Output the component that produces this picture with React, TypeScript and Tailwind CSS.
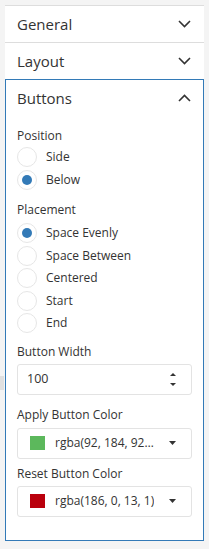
import { useState } from "react";

const font = { fontFamily: '"Open Sans", "Noto Sans", sans-serif' };

function Chevron({ up }: { up?: boolean }) {
  return (
    <svg width="13" height="8" viewBox="0 0 13 8" className="text-[#333]">
      <path
        d={up ? "M1 7 L6.5 1.5 L12 7" : "M1 1 L6.5 6.5 L12 1"}
        fill="none"
        stroke="currentColor"
        strokeWidth="1.6"
      />
    </svg>
  );
}

function Radio({ label, checked, onClick }: { label: string; checked: boolean; onClick: () => void }) {
  return (
    <div className="flex items-center h-[22.5px] cursor-pointer" onClick={onClick}>
      <span className="w-[20px] h-[20px] rounded-full border border-[#e6e6e6] bg-white flex items-center justify-center">
        {checked && <span className="w-[10px] h-[10px] rounded-full bg-[#337ab7]" />}
      </span>
      <span className="ml-[9px] text-[12px] text-[#333]">{label}</span>
    </div>
  );
}

function CaretDown() {
  return (
    <svg width="7" height="4" viewBox="0 0 7 4" className="shrink-0 ml-auto">
      <path d="M0 0 L7 0 L3.5 4 Z" fill="#333" />
    </svg>
  );
}

function ColorSelect({ color, value }: { color: string; value: string }) {
  return (
    <div className="h-[31px] border border-[#e3e3e3] rounded-[3px] flex items-center pl-[12px] pr-[15px]">
      <span className="w-[15px] h-[14px] shrink-0" style={{ backgroundColor: color }} />
      <span className="ml-[10px] max-w-[101px] text-[12px] text-[#333] truncate">{value}</span>
      <CaretDown />
    </div>
  );
}

export default function App() {
  const [position, setPosition] = useState("Below");
  const [placement, setPlacement] = useState("Space Evenly");

  return (
    <div className="min-h-[549px] bg-[#f4f4f4] pt-[5px] px-[5px] relative" style={font}>
      <div className="absolute left-0 top-[376px] w-[4px] h-[14px] bg-[#e0e0e0]" />
      <div className="bg-white">
        <div className="border-t border-[#dddddd] h-[37px] flex items-center justify-between pl-[12px] pr-[13px]">
          <span className="text-[15px] text-[#333]">General</span>
          <Chevron />
        </div>
        <div className="border-t border-[#dddddd] h-[37px] flex items-center justify-between pl-[12px] pr-[13px]">
          <span className="text-[15px] text-[#333]">Layout</span>
          <Chevron />
        </div>
        <div className="border border-[#337ab7] w-[199px]">
          <div className="h-[36px] flex items-center justify-between pl-[11px] pr-[12px]">
            <span className="text-[15px] text-[#333]">Buttons</span>
            <Chevron up />
          </div>
          <div className="pl-[11px] pr-[11px] pt-[12px] pb-[23px]">
            <div className="text-[12px] text-[#333] leading-[16px]">Position</div>
            <div className="mt-[2px]">
              {["Side", "Below"].map((o) => (
                <Radio key={o} label={o} checked={position === o} onClick={() => setPosition(o)} />
              ))}
            </div>
            <div className="text-[12px] text-[#333] leading-[16px] mt-[11px]">Placement</div>
            <div className="mt-[4px]">
              {["Space Evenly", "Space Between", "Centered", "Start", "End"].map((o) => (
                <Radio key={o} label={o} checked={placement === o} onClick={() => setPlacement(o)} />
              ))}
            </div>
            <div className="text-[12px] text-[#333] leading-[16px] mt-[9px]">Button Width</div>
            <div className="mt-[4px] h-[31px] border border-[#e3e3e3] rounded-[3px] flex items-center justify-between pl-[9px] pr-[15px] w-[175px]">
              <span className="text-[12.5px] text-[#333]">100</span>
              <div className="flex flex-col gap-[7px]">
                <svg width="6" height="3" viewBox="0 0 6 3"><path d="M0 3 L6 3 L3 0 Z" fill="#333" /></svg>
                <svg width="6" height="3" viewBox="0 0 6 3"><path d="M0 0 L6 0 L3 3 Z" fill="#333" /></svg>
              </div>
            </div>
            <div className="text-[12px] text-[#333] leading-[16px] mt-[12px]">Apply Button Color</div>
            <div className="mt-[5px] w-[175px]">
              <ColorSelect color="rgba(92, 184, 92, 1)" value="rgba(92, 184, 92, 1)" />
            </div>
            <div className="text-[12px] text-[#333] leading-[16px] mt-[7px]">Reset Button Color</div>
            <div className="mt-[4px] w-[175px]">
              <ColorSelect color="rgba(186, 0, 13, 1)" value="rgba(186, 0, 13, 1)" />
            </div>
          </div>
        </div>
      </div>
    </div>
  );
}
